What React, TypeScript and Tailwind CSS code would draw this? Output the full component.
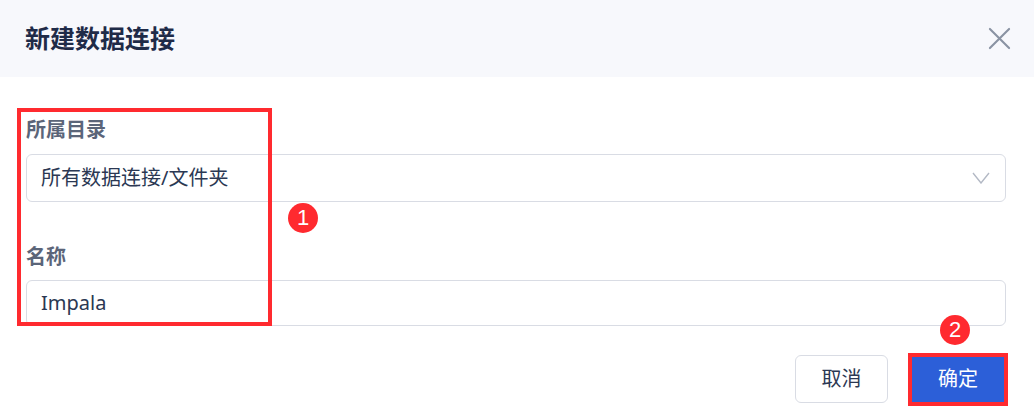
import React from "react";

export default function App() {
  return (
    <div
      className="relative w-[1034px] h-[413px] bg-white overflow-hidden"
      style={{ fontFamily: '"Noto Sans", "Noto Sans CJK SC", sans-serif' }}
    >
      <div className="h-[77px] bg-[#f7f8fc] flex items-center justify-between pl-[25px] pr-[23px]">
        <div className="text-[25px] font-bold text-[#1f2b48] leading-none">新建数据连接</div>
        <svg width="23" height="23" viewBox="0 0 24 24" className="text-[#8a93a3]">
          <path d="M2 2 L22 22 M22 2 L2 22" stroke="currentColor" strokeWidth="2.2" strokeLinecap="round" fill="none" />
        </svg>
      </div>

      <div className="pl-[26px] pr-[28px] pt-[39px]">
        <div className="h-[28px] flex items-center text-[20px] font-bold text-[#5b6579]">所属目录</div>
        <div className="mt-[10px] h-[48px] border border-[#d9dce4] rounded-[6px] flex items-center justify-between pl-[14px] pr-[15px]">
          <span className="text-[20px] text-[#2b3853]">所有数据连接/文件夹</span>
          <svg width="18" height="12" viewBox="0 0 18 12">
            <path d="M1 1 L9 11 L17 1" stroke="#b3b9c5" strokeWidth="1.4" fill="none" />
          </svg>
        </div>

        <div className="mt-[41px] h-[28px] flex items-center text-[20px] font-bold text-[#5b6579]">名称</div>
        <div className="mt-[9px] h-[46px] border border-[#d9dce4] rounded-[6px] flex items-center pl-[14px]">
          <span className="text-[20px] text-[#2b3853]">Impala</span>
        </div>

        <div className="mt-[29px] flex justify-end gap-[22px]">
          <button className="w-[93px] h-[48px] border border-[#d9dce4] rounded-[6px] bg-white text-[20px] text-[#2b3853]">
            取消
          </button>
          <button className="w-[96px] h-[48px] rounded-[4px] bg-[#2c5fd8] text-[20px] text-white">
            确定
          </button>
        </div>
      </div>

      {/* annotations */}
      <div className="absolute left-[17px] top-[108px] w-[255px] h-[218px] border-[4px] border-[#ff2a2f]" />
      <div
        className="absolute left-[288px] top-[203px] w-[30px] h-[30px] rounded-full bg-[#ff2a2f] text-white text-[22px] flex items-center justify-center leading-none"
        style={{ fontFamily: '"Liberation Sans", sans-serif' }}
      >
        1
      </div>
      <div
        className="absolute left-[940px] top-[315px] w-[30px] h-[30px] rounded-full bg-[#ff2a2f] text-white text-[22px] flex items-center justify-center leading-none"
        style={{ fontFamily: '"Liberation Sans", sans-serif' }}
      >
        2
      </div>
      <div className="absolute left-[908px] top-[353px] w-[100px] h-[53px] border-[4px] border-[#ff2a2f]" />
    </div>
  );
}
